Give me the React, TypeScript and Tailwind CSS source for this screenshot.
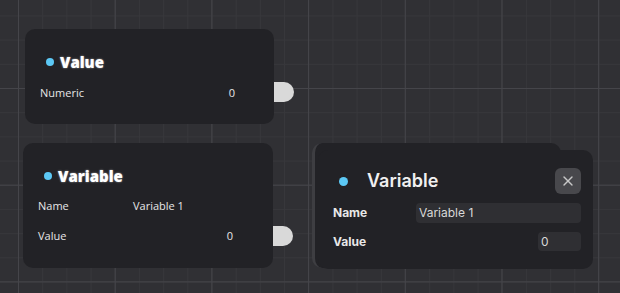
import { X } from "lucide-react";

function Dot({ className = "" }: { className?: string }) {
  return <span className={`inline-block h-2 w-2 rounded-full bg-[#5cc8f5] ${className}`} />;
}

function Handle({ left, top }: { left: number; top: number }) {
  return (
    <span
      className="absolute h-[20px] w-[20px] rounded-r-full bg-[#d9d9d9]"
      style={{ left, top }}
    />
  );
}

export default function App() {
  return (
    <div className="relative h-[293px] w-[620px] overflow-hidden bg-[#303034] bg-[linear-gradient(to_right,#45454a_1px,transparent_1px),linear-gradient(to_bottom,#45454a_1px,transparent_1px),linear-gradient(to_right,#37373b_1px,transparent_1px),linear-gradient(to_bottom,#37373b_1px,transparent_1px)] [background-size:96.7px_96.7px,96.7px_96.7px,24.2px_24.2px,24.2px_24.2px] [background-position:18px_88px] font-['Open_Sans',sans-serif] text-white">
      {/* Value node */}
      <div className="absolute left-[25px] top-[29px] flex h-[95px] w-[249px] flex-col rounded-[10px] bg-[#222226] pl-[15px] pr-[39px] pt-[23px]">
        <div className="flex items-center gap-[6px] pl-[6px]">
          <Dot />
          <span className="text-[15px] font-extrabold leading-5 [text-shadow:0_0_2px_rgba(255,255,255,0.6)]">Value</span>
        </div>
        <div className="mt-[13px] flex items-center justify-between text-[11px] leading-4 text-[#e6e6e6]">
          <span>Numeric</span>
          <span>0</span>
        </div>
      </div>
      <Handle left={274} top={82} />

      {/* Variable node */}
      <div className="absolute left-[23px] top-[143px] flex h-[125px] w-[250px] flex-col rounded-[10px] bg-[#222226] pl-[15px] pr-[40px] pt-[23px]">
        <div className="flex items-center gap-[6px] pl-[6px]">
          <Dot />
          <span className="text-[15px] font-extrabold leading-5 [text-shadow:0_0_2px_rgba(255,255,255,0.6)]">Variable</span>
        </div>
        <div className="mt-[12px] grid grid-cols-[95px_1fr] text-[11px] leading-4 text-[#e6e6e6]">
          <span>Name</span>
          <span>Variable 1</span>
        </div>
        <div className="mt-[14px] flex items-center justify-between text-[11px] leading-4 text-[#e6e6e6]">
          <span>Value</span>
          <span>0</span>
        </div>
      </div>
      <Handle left={273} top={226} />

      {/* edited node copy behind panel */}
      <div className="absolute left-[312px] top-[143px] h-[125px] w-[249px] rounded-[10px] border-l-[3px] border-[#3e3e42] bg-[#222226]" />

      {/* Edit panel */}
      <div className="absolute left-[318px] top-[150px] flex h-[119px] w-[275px] flex-col rounded-[10px] bg-[#222226] pl-[15px] pr-[12px] pt-[18px] font-['Inter',sans-serif]">
        <div className="flex items-center justify-between">
          <div className="flex items-center pl-[6px]">
            <Dot className="h-[9px] w-[9px]" />
            <span className="ml-[19px] text-[18px] font-semibold leading-6 text-[#f0f0f0]">Variable</span>
          </div>
          <button className="flex h-[26px] w-[26px] items-center justify-center rounded-[6px] bg-[#48484c] text-[#c8c8c8]">
            <X className="h-4 w-4" strokeWidth={2} />
          </button>
        </div>
        <div className="mt-[9px] flex items-center justify-between">
          <span className="text-[12px] font-bold text-[#e8e8e8]">Name</span>
          <div className="flex h-[20px] w-[165px] items-center rounded-[4px] bg-[#2f2f33] px-[3px] text-[12px] text-[#d8d8d8]">Variable 1</div>
        </div>
        <div className="mt-[9px] flex items-center justify-between">
          <span className="text-[12px] font-bold text-[#e8e8e8]">Value</span>
          <div className="flex h-[19px] w-[43px] items-center rounded-[4px] bg-[#2f2f33] px-[3px] text-[12px] text-[#d8d8d8]">0</div>
        </div>
      </div>
    </div>
  );
}
